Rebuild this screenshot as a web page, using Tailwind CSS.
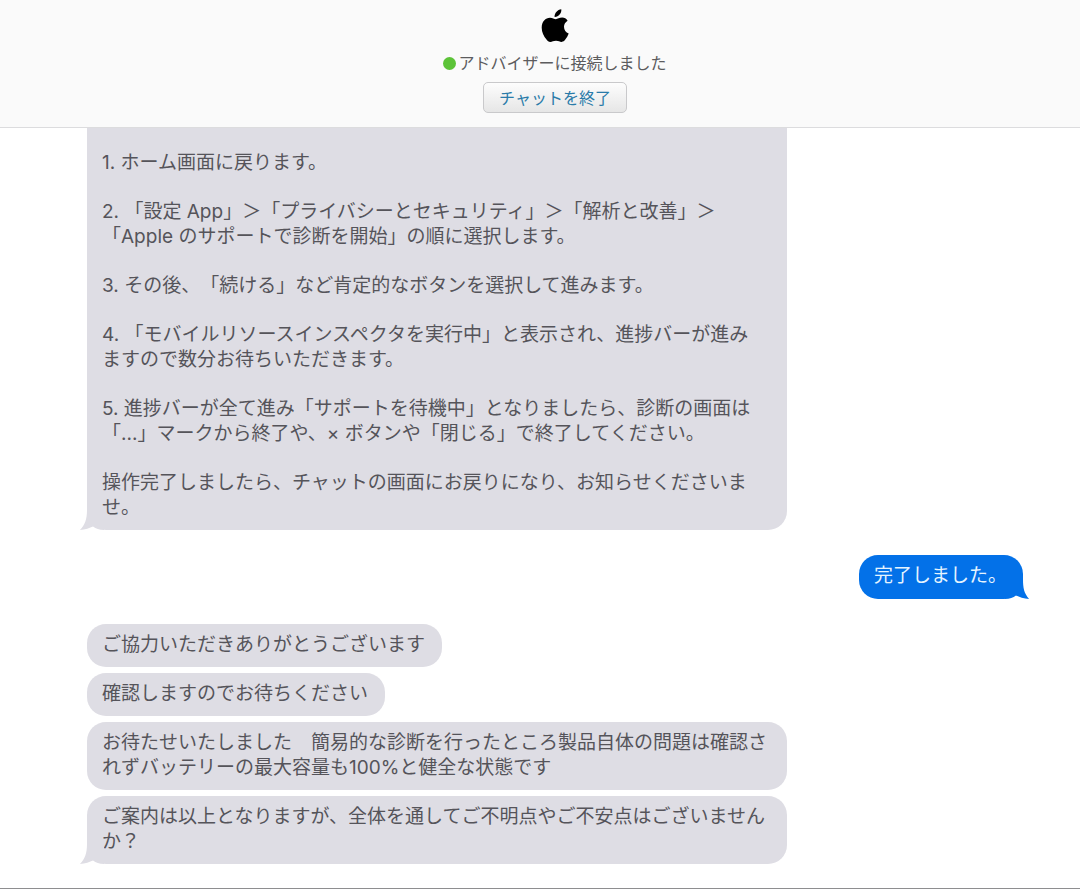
<!DOCTYPE html>
<html lang="ja">
<head>
    <meta charset="UTF-8" />
    <meta name="viewport" content="width=device-width, initial-scale=1.0" />
    <title>サポートチャット</title>
    <script src="https://cdn.jsdelivr.net/npm/@tailwindcss/browser@4"></script>
</head>
<body class="min-h-screen flex flex-col bg-white border-b border-[#8e8e90] font-['Inter','Noto_Sans_CJK_JP',sans-serif] text-[#55545a] [text-spacing-trim:space-all]">

<!-- ヘッダー -->
<header class="flex flex-col items-center pl-[87px] pr-[57px] pt-2 pb-[14px] bg-[#fafafa] border-b border-[#dcdcde]">
    <svg class="w-7 h-[34px]" viewBox="0 0 28 34" fill="#000" role="img" aria-label="Apple">
        <path d="M20.3 1.2c.3 2-.5 3.900-1.700 5.400-1.200 1.500-3.100 2.600-5 2.500-.3-1.900.6-3.900 1.700-5.200 1.200-1.500 3.300-2.600 5-2.700z" />
        <path d="M26.600 12.700c-2.200 1.400-3.600 3.400-3.600 6.100 0 3.200 1.900 5.600 4.700 6.700-.8 2.300-2 4.300-3.400 6.100-1 1.300-2.100 2.300-3.700 2.300-1.900 0-2.900-1.200-5.600-1.200s-3.800 1.200-5.700 1.200c-1.600 0-2.800-1.200-3.800-2.500C2.700 28.200.7 24.200.7 19.700c0-6.300 3.800-10 8.300-10 2.500 0 4.300 1.500 5.900 1.500 1.500 0 3.600-1.600 6.300-1.600 2.200 0 4.200 1.200 5.400 3.100z" />
    </svg>
    <p class="flex items-center gap-[2px] mt-[9px] text-base leading-6 text-[#5c5c5e]">
        <span class="size-[13px] rounded-full bg-[#5cc338]"></span>アドバイザーに接続しました
    </p>
    <button type="button" class="mt-[7px] px-[15px] h-[31px] rounded-[5px] border border-[#c9c9cb] bg-linear-to-b from-[#fdfdfd] to-[#e6e6e6] text-base leading-6 text-[#2a7ba9]">チャットを終了</button>
</header>

<!-- 会話 -->
<main class="flex-1 flex flex-col gap-[25px] pl-[87px] pr-[57px] pb-6 text-[19px] leading-[25px]">

    <!-- アドバイザー -->
    <div class="relative w-full max-w-[700px] flex flex-col gap-6 pl-[15px] pr-[17px] pt-[22px] pb-[10px] rounded-b-[19px] bg-[#dedde4]">
        <p>1. ホーム画面に戻ります。</p>
        <p>2. 「設定 App」＞「プライバシーとセキュリティ」＞「解析と改善」＞<br />「Apple のサポートで診断を開始」の順に選択します。</p>
        <p>3. その後、「続ける」など肯定的なボタンを選択して進みます。</p>
        <p>4. 「モバイルリソースインスペクタを実行中」と表示され、進捗バーが進み<br />ますので数分お待ちいただきます。</p>
        <p>5. 進捗バーが全て進み「サポートを待機中」となりましたら、診断の画面は<br />「...」マークから終了や、× ボタンや「閉じる」で終了してください。</p>
        <p>操作完了しましたら、チャットの画面にお戻りになり、お知らせくださいま<br />せ。</p>
        <svg class="absolute bottom-0 -left-[7px] w-6 h-5" viewBox="0 0 24 20" aria-hidden="true">
            <path d="M7 0C7 9 5 15 0 20h24V0z" fill="#dedde4" />
            <path d="M0 20C5 19.500 10 18 13 16.500 16 18.500 19 20 24 20z" fill="#fff" />
        </svg>
    </div>

    <!-- お客様 -->
    <div class="relative self-end pl-[15px] pr-4 pt-2 pb-[11px] rounded-[19px] bg-[#0371e8] text-[#e6f4ff]">
        <p>完了しました。</p>
        <svg class="absolute bottom-0 -right-[6px] w-6 h-5" viewBox="0 0 24 20" aria-hidden="true">
            <path d="M18 0C18 9 19 14 24 20H0V0z" fill="#0371e8" />
            <path d="M24 20C19 19.500 14 18 11 16.500 8 18.500 5 20 0 20z" fill="#fff" />
        </svg>
    </div>

    <!-- アドバイザー -->
    <div class="flex flex-col items-start gap-[6px]">
        <p class="max-w-[700px] pl-[15px] pr-[17px] pt-2 pb-[10px] rounded-[19px] bg-[#dedde4]">ご協力いただきありがとうございます</p>
        <p class="max-w-[700px] pl-[15px] pr-[17px] pt-2 pb-[10px] rounded-[19px] bg-[#dedde4]">確認しますのでお待ちください</p>
        <p class="w-full max-w-[700px] pl-[15px] pr-[17px] pt-2 pb-[10px] rounded-[19px] bg-[#dedde4]">お待たせいたしました　簡易的な診断を行ったところ製品自体の問題は確認さ<br />れずバッテリーの最大容量も100%と健全な状態です</p>
        <div class="relative w-full max-w-[700px] pl-[15px] pr-[17px] pt-2 pb-[10px] rounded-[19px] bg-[#dedde4]">
            <p>ご案内は以上となりますが、全体を通してご不明点やご不安点はございません<br />か？</p>
            <svg class="absolute bottom-0 -left-[7px] w-6 h-5" viewBox="0 0 24 20" aria-hidden="true">
                <path d="M7 0C7 9 5 15 0 20h24V0z" fill="#dedde4" />
                <path d="M0 20C5 19.500 10 18 13 16.500 16 18.500 19 20 24 20z" fill="#fff" />
            </svg>
        </div>
    </div>
</main>

</body>
</html>
